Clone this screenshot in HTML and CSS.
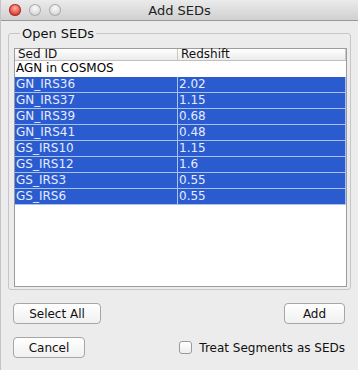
FILE: index.html
```html
<!DOCTYPE html>
<html lang="en">
<head>
  <meta charset="UTF-8" />
  <title>Add SEDs</title>
  <link rel="stylesheet" href="styles.css">
</head>
<body>
  <div class="window">
    <div class="titlebar">
      <div class="lights">
        <span class="light close"></span>
        <span class="light"></span>
        <span class="light"></span>
      </div>
      <div class="title">Add SEDs</div>
    </div>

    <div class="content">
      <fieldset class="group">
        <legend>Open SEDs</legend>
        <div class="pane">
          <table class="seds">
            <thead>
              <tr><th class="col-id">Sed ID</th><th>Redshift</th></tr>
            </thead>
            <tbody>
              <tr><td>AGN in COSMOS</td><td></td></tr>
              <tr class="sel"><td>GN_IRS36</td><td>2.02</td></tr>
              <tr class="sel"><td>GN_IRS37</td><td>1.15</td></tr>
              <tr class="sel"><td>GN_IRS39</td><td>0.68</td></tr>
              <tr class="sel"><td>GN_IRS41</td><td>0.48</td></tr>
              <tr class="sel"><td>GS_IRS10</td><td>1.15</td></tr>
              <tr class="sel"><td>GS_IRS12</td><td>1.6</td></tr>
              <tr class="sel"><td>GS_IRS3</td><td>0.55</td></tr>
              <tr class="sel"><td>GS_IRS6</td><td>0.55</td></tr>
            </tbody>
          </table>
        </div>
      </fieldset>

      <div class="row">
        <button class="btn btn-select">Select All</button>
        <button class="btn btn-add">Add</button>
      </div>
      <div class="row">
        <button class="btn btn-cancel">Cancel</button>
        <label class="check"><span class="box"></span>Treat Segments as SEDs</label>
      </div>
    </div>
  </div>
</body>
</html>
```

FILE: styles.css
```css
body {
  margin: 0;
  padding: 0;
  font-family: 'DejaVu Sans', sans-serif;
  background-color: #ececec;
}

.window {
  width: 358px;
  height: 370px;
  background: #ececec;
  box-sizing: border-box;
  border-left: 1px solid #c4c4c4;
  overflow: hidden;
}

.titlebar {
  height: 21px;
  background: linear-gradient(#ebebeb, #d0d0d0);
  border-bottom: 1px solid #999;
  box-sizing: border-box;
  display: flex;
  align-items: center;
  position: relative;
}

.lights {
  display: flex;
  gap: 8px;
  padding-left: 8px;
}

.light {
  width: 12px;
  height: 12px;
  border-radius: 50%;
  background: radial-gradient(circle at 50% 35%, #fafafa, #d6d6d6 70%, #b8b8b8);
  box-shadow: inset 0 0 0 1px #ababab;
}

.light.close {
  background: radial-gradient(circle at 50% 35%, #ffb0a8, #e4473b 60%, #b3281e);
  box-shadow: inset 0 0 0 1px #a8352b;
}

.title {
  position: absolute;
  left: 0;
  right: 0;
  text-align: center;
  font-size: 13px;
  color: #222;
}

.content {
  padding: 5px 7px 0 7px;
}

.group {
  margin: 0;
  padding: 7px 3px 2px 5px;
  border: 1px solid #c6c6c6;
  border-radius: 3px;
  height: 264px;
  box-sizing: border-box;
}

.group legend {
  font-size: 13px;
  padding: 0 2px;
  margin-left: 6px;
  color: #111;
}

.pane {
  background: #fff;
  border: 1px solid #9c9c9c;
  height: 100%;
  box-sizing: border-box;
}

.seds {
  width: 100%;
  border-collapse: collapse;
  font-size: 12px;
}

.seds th {
  font-weight: normal;
  text-align: left;
  height: 11px;
  line-height: 11px;
  padding: 0 3px;
  background: linear-gradient(#ffffff, #ebebeb);
  border-bottom: 1px solid #c0c0c0;
  border-right: 1px solid #c8c8c8;
  color: #111;
}

.seds .col-id {
  width: 156px;
}

.seds td {
  height: 15px;
  line-height: 15px;
  padding: 0 1px;
  border-bottom: 1px solid #fff;
  color: #000;
}

.seds tr.sel td {
  background: #2a5bcf;
  color: #e6ecff;
  border-bottom: 1px solid #a9c1ee;
  border-right: 1px solid #a9c1ee;
}

.row {
  display: flex;
  justify-content: space-between;
  align-items: center;
  padding: 0 5px;
  margin-top: 13px;
}

.btn {
  font-family: 'DejaVu Sans', sans-serif;
  font-size: 12px;
  height: 21px;
  padding: 0 12px;
  background: linear-gradient(#ffffff, #f0f0f0);
  border: 1px solid #a6a6a6;
  border-radius: 4px;
  color: #111;
}

.btn-select { width: 88px; }
.btn-cancel { width: 72px; }
.btn-add { width: 61px; margin-right: 1px; }

.check {
  display: flex;
  align-items: center;
  gap: 7px;
  font-size: 12px;
  color: #111;
  margin-right: 1px;
}

.box {
  width: 13px;
  height: 13px;
  border: 1px solid #9a9a9a;
  border-radius: 3px;
  background: linear-gradient(#ffffff, #eeeeee);
  box-sizing: border-box;
}
```
